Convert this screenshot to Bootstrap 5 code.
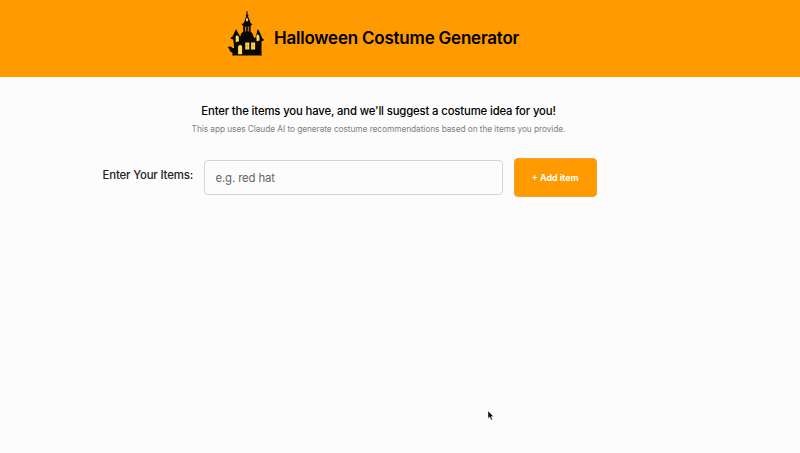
<!DOCTYPE html>
<html lang="en">
<head>
<meta charset="utf-8">
<meta name="viewport" content="width=device-width, initial-scale=1">
<title>Halloween Costume Generator</title>
<link href="https://cdn.jsdelivr.net/npm/bootstrap@5.3.0/dist/css/bootstrap.min.css" rel="stylesheet">
<style>
body{font-family:Inter,"Liberation Sans",sans-serif;background:#fcfcfc;color:#000;min-height:453px;overflow:hidden}
.site-header{background:#ff9a00;height:77px;padding:10px 0 0 227px;gap:8px}
.site-title{font-size:17px;font-weight:600;line-height:20px;margin:18px 0 0;white-space:nowrap;letter-spacing:-.22px}
.intro{width:757px;padding-top:27px}
.intro h2{font-size:11.3px;font-weight:500;line-height:15px;margin:0;letter-spacing:-.135px}
.intro p{font-size:8.3px;line-height:12px;margin:4px 0 0;color:#808080;letter-spacing:-.055px}
.item-form{padding:23px 0 0 102.5px}
.item-form label{font-size:11.4px;font-weight:500;line-height:16px;width:101.5px;margin-top:9px;color:#222;white-space:nowrap;letter-spacing:-.16px}
.item-form .form-control{width:299px;height:35px;margin-top:2px;padding:0 10.5px;font-size:11.4px;letter-spacing:-.15px;border:1px solid #d5d5d5;border-radius:4px;background:#fcfcfc}
.item-form .form-control::placeholder{color:#666;opacity:1}
.btn-add{width:83.5px;height:39px;margin-left:10.5px;padding:0;background:#ff9a00;border:1px solid #eea032;border-radius:4px;color:#fff;font-size:8.9px;font-weight:700}
.btn-add:hover{background:#f29100;color:#fff}
.pointer{left:487px;top:410px}
</style>
</head>
<body>
<header class="site-header d-flex align-items-start">
<svg width="39" height="46" viewBox="0 0 39 46" aria-hidden="true">
<path fill="#0a0803" d="M19.6 1h.8l.3 3.6 1 .6-.8.8 1.1 2.5 1.6 4.5 1.8 1.2-.9 1.1-.8.4v6.1l1.6 1.4 1.4 3.8.9 1.3 1.4-1.8 1.6-7.2 1.2 1 2.6 5.7 1 2.6 2.1 1.3-2 1.2-1 .5v12.7l.6 1.2H5.2l.4-2.7-1.9-.8L1.5 38l-.8-.9 2-.6 1.5.3 1.4 1.4 1.5-.5-.4-4.5-.5-3.8-1.9-.5-.9-.8 2.3-1.8L9 19l1.6 3 2.6 4.4 1.3-3.4 1.7-1.2v-6l-1.5-1 .6-1 1.7-1.1L18.4 8.500l.9-2.500-.8-.9.9-.6z"/>
<path fill="#d98305" d="M18 16.500h.9v5H18zm3.200 0h.9v5h-.9z"/>
<path fill="#6d511b" d="M19.6 16.300h.8v5h-.8z"/>
<path fill="#ffd990" d="M20 7.500l1.300 2.200L20 12l-1.200-2.300z"/>
<path fill="#ffe052" d="M8.700 26.300l1.500-1.100 1.500 1.400.2 5-3.200.3zM29.300 26l1.500-1.700 1.500 1.800.3 4.500-3 .6zM11.100 36.200l2-1.400 2 1.200v8.200h-4zM18.300 32.600h4v6.900h-4zM24.100 32.600h4v6.900h-4z"/>
<path fill="none" stroke="#a5841c" stroke-width=".4" d="M20.300 32.600v6.900M26.100 32.600v6.900M18.300 36h4M24.100 36h4"/>
</svg>
<h1 class="site-title">Halloween Costume Generator</h1>
</header>
<main>
<section class="intro text-center">
<h2>Enter the items you have, and we'll suggest a costume idea for you!</h2>
<p>This app uses Claude AI to generate costume recommendations based on the items you provide.</p>
</section>
<form class="item-form d-flex align-items-start">
<label for="item">Enter Your Items:</label>
<input class="form-control" id="item" type="text" placeholder="e.g. red hat">
<button class="btn btn-add" type="button">+ Add item</button>
</form>
</main>
<svg class="pointer position-absolute" width="7" height="11" viewBox="0 0 7 11" aria-hidden="true"><path d="M1 .8v7.700l1.800-1.600L4.100 10l1.400-.6-1.300-2.800h2.300z" fill="#000" stroke="#fff" stroke-width=".5"/></svg>
<script src="https://cdn.jsdelivr.net/npm/bootstrap@5.3.0/dist/js/bootstrap.bundle.min.js"></script>
</body>
</html>
